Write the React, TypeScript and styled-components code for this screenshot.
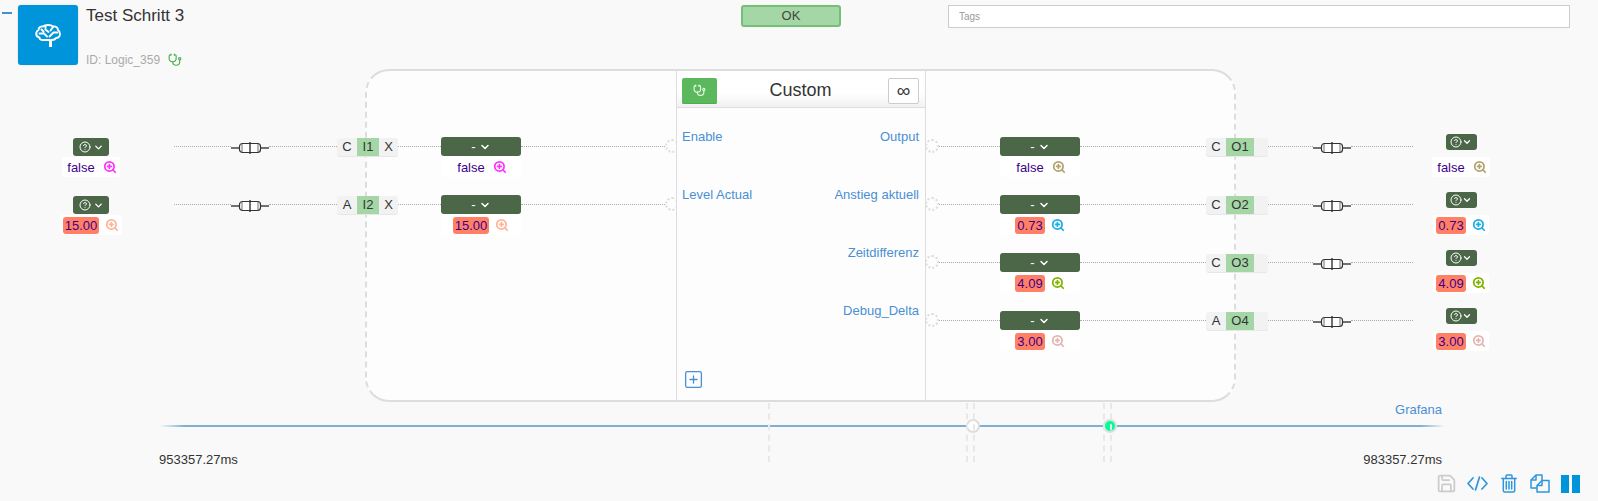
import React from 'react';
import styled, { createGlobalStyle } from 'styled-components';
import { ChevronDown, CircleHelp, Save, SquarePlus, Stethoscope, ZoomIn } from 'lucide-react';

const GlobalStyle = createGlobalStyle`
  html, body {
    margin: 0;
    padding: 0;
    background: #f9f9f9;
    font-family: "Liberation Sans", Arial, sans-serif;
    color: #333;
    overflow: hidden;
  }
`;

const Page = styled.div`
  width: 1598px;
  height: 501px;
`;

const Header = styled.header`
  display: flex;
  align-items: flex-start;
  height: 69px;
`;

const Collapse = styled.div`
  width: 10px;
  height: 2px;
  margin: 12px 6px 0 2px;
  background: #4a90c8;
`;

const Tile = styled.div`
  display: flex;
  align-items: center;
  justify-content: center;
  width: 60px;
  height: 60px;
  margin-top: 5px;
  border-radius: 3px;
  background: #0095da;
  box-shadow: 0 0 2px rgba(0, 0, 0, 0.15);
`;

const TitleBlock = styled.div`
  width: 655px;
  margin-left: 8px;
`;

const Title = styled.div`
  margin-top: 6px;
  font-size: 17px;
  line-height: 20px;
  color: #333;
`;

const IdRow = styled.div`
  display: flex;
  align-items: center;
  gap: 8px;
  margin-top: 26px;
  font-size: 12px;
  line-height: 16px;
  color: #aaa;
`;

const Status = styled.div`
  box-sizing: border-box;
  width: 100px;
  height: 22px;
  margin-top: 5px;
  border: 2px solid #72c176;
  border-radius: 3px;
  background: #a5d6a5;
  color: #444;
  font-size: 13px;
  line-height: 17px;
  text-align: center;
`;

const Tags = styled.div`
  box-sizing: border-box;
  width: 622px;
  height: 23px;
  margin: 5px 0 0 107px;
  padding-left: 10px;
  border: 1px solid #ccc;
  background: #fff;
  color: #999;
  font-size: 10px;
  line-height: 21px;
`;

const Stage = styled.section`
  position: relative;
  display: flex;
  height: 333px;

  &::before {
    content: '';
    position: absolute;
    top: 0;
    left: 365px;
    box-sizing: border-box;
    width: 871px;
    height: 333px;
    border: 2px solid #ddd;
    border-left-style: dashed;
    border-right-style: dashed;
    border-radius: 24px;
    background: #fdfdfd;
  }
`;

const Side = styled.div<{ $width: number }>`
  position: relative;
  width: ${(p) => p.$width}px;
  padding-top: 68px;
`;

const Row = styled.div`
  display: flex;
  align-items: flex-start;
  height: 58px;
`;

const Wire = styled.div<{ $width?: number }>`
  display: flex;
  align-items: center;
  flex: ${(p) => (p.$width ? `0 0 ${p.$width}px` : '1')};
  height: 19px;

  &::before {
    content: '';
    flex: 1;
    border-top: 1px dotted #aaa;
  }
`;

const FuseBox = styled.div`
  display: flex;
  align-items: center;
  height: 19px;
  margin-top: 1px;
`;

const OuterCell = styled.div<{ $width: number; $lift?: number; $gap: number; $overhang?: number }>`
  display: flex;
  flex-direction: column;
  align-items: center;
  gap: ${(p) => p.$gap}px;
  flex: 0 0 ${(p) => p.$width}px;
  margin-top: ${(p) => p.$lift ?? 0}px;
  margin-right: ${(p) => -(p.$overhang ?? 0)}px;
`;

const SignalCell = styled.div`
  display: flex;
  flex-direction: column;
  flex: 0 0 80px;
`;

const Select = styled.div<{ $width?: number; $height: number; $gap?: number }>`
  display: flex;
  align-items: center;
  justify-content: center;
  gap: ${(p) => p.$gap ?? 0}px;
  width: ${(p) => (p.$width ? `${p.$width}px` : '100%')};
  height: ${(p) => p.$height}px;
  border-radius: 3px;
  background: #4b6748;
  color: #fff;
  font-size: 13px;
  line-height: 1;
`;

const ValueBox = styled.div<{ $full?: boolean }>`
  display: flex;
  align-items: center;
  justify-content: center;
  gap: 6px;
  box-sizing: border-box;
  width: ${(p) => (p.$full ? '100%' : 'auto')};
  height: ${(p) => (p.$full ? '21px' : '20px')};
  padding: ${(p) => (p.$full ? '1px 3px 0' : '0 3px')};
  background: #fff;
  border-radius: 3px;
`;

const Value = styled.span<{ $alert: boolean }>`
  padding: 0 2px;
  border-radius: 3px;
  background: ${(p) => (p.$alert ? '#ff8064' : 'transparent')};
  color: #40008c;
  font-size: 13px;
  line-height: 17px;
`;

const Ports = styled.div<{ $width: number }>`
  display: grid;
  grid-template-columns: 20px 1fr ${(p) => (p.$width === 62 ? '14px' : '19px')};
  flex: 0 0 ${(p) => p.$width}px;
  height: 18px;
  margin-top: 1px;
  position: relative;
  border-radius: 3px;
  background: #f2f2f2;
  box-shadow: 0 1px 0 #e8e8e8;
  font-size: 13px;
  line-height: 18px;
  text-align: center;
`;

const PortName = styled.span`
  background: #a5d6a5;
`;

const Socket = styled.div<{ $side: 'left' | 'right' }>`
  flex: 0 0 14px;
  box-sizing: border-box;
  height: 14px;
  margin-top: 2px;
  margin-left: ${(p) => (p.$side === 'right' ? '-1px' : '0')};
  margin-right: ${(p) => (p.$side === 'left' ? '-3px' : '0')};
  border: 2px dotted #ddd;
  border-radius: 50%;
`;

const Panel = styled.div`
  position: relative;
  display: flex;
  flex-direction: column;
  box-sizing: border-box;
  width: 250px;
  margin: 2px 0;
  border-left: 1px solid #ddd;
  border-right: 1px solid #ddd;
  background: #fdfdfd;
`;

const PanelHeader = styled.div`
  display: flex;
  align-items: center;
  justify-content: space-between;
  box-sizing: border-box;
  height: 37px;
  padding: 3px 6px 0 5px;
  border-bottom: 1px solid #ddd;
  background: linear-gradient(to bottom, #fff 60%, #f1f1f1);
`;

const DebugButton = styled.div`
  display: flex;
  align-items: center;
  justify-content: center;
  width: 35px;
  height: 26px;
  border-radius: 2px;
  background: #5cb85c;
  box-shadow: inset 0 -1px 0 #4cae4c;
`;

const PanelTitle = styled.div`
  margin-right: 4px;
  font-size: 18px;
  color: #333;
`;

const LoopButton = styled.div`
  box-sizing: border-box;
  width: 31px;
  height: 26px;
  border: 1px solid #ccc;
  border-radius: 2px;
  background: #fff;
  color: #333;
  font-size: 19px;
  font-weight: 400;
  line-height: 24px;
  text-align: center;
`;

const PanelBody = styled.div`
  display: grid;
  grid-template-columns: 1fr 1fr;
  flex: 1;
  padding: 21px 6px 0 5px;
`;

const LabelColumn = styled.div<{ $right?: boolean }>`
  text-align: ${(p) => (p.$right ? 'right' : 'left')};
  white-space: nowrap;
`;

const PinLabel = styled.div`
  height: 58px;
  color: #4a8fd4;
  font-size: 13px;
  line-height: 16px;
`;

const AddRow = styled.div`
  display: flex;
  padding: 0 0 10px 6px;
  color: #4a8fd4;
`;

const Timeline = styled.section`
  position: relative;
  width: 1285px;
  height: 71px;
  margin-left: 160px;
`;

const Grafana = styled.div`
  padding-right: 3px;
  color: #4a8fd4;
  font-size: 13px;
  line-height: 16px;
  text-align: right;
`;

const Track = styled.div`
  height: 2px;
  margin-top: 7px;
  background: linear-gradient(to right, transparent, #7fb0d4 24px, #7fb0d4 calc(100% - 24px), transparent);
`;

const Range = styled.div`
  display: flex;
  justify-content: space-between;
  margin: 25px 3px 0 -1px;
  color: #333;
  font-size: 13px;
  line-height: 16px;
`;

const Dash = styled.div<{ $x: number }>`
  position: absolute;
  top: 1px;
  left: ${(p) => p.$x}px;
  height: 59px;
  border-left: 2px dashed #e8e8e8;
`;

const Handle = styled.div<{ $x: number; $fill: string }>`
  position: absolute;
  top: 17px;
  left: ${(p) => p.$x - 7}px;
  box-sizing: border-box;
  width: 14px;
  height: 14px;
  border: 2px solid #ddd;
  border-radius: 50%;
  background: ${(p) => p.$fill};
`;

const Toolbar = styled.div`
  display: flex;
  justify-content: flex-end;
  padding-right: 12px;
  height: 28px;
`;

const ToolButton = styled.div<{ $color: string }>`
  display: flex;
  align-items: center;
  justify-content: center;
  width: 31px;
  height: 21px;
  color: ${(p) => p.$color};
`;

const Pause = styled.div`
  display: flex;
  gap: 3px;
  height: 18px;

  &::before,
  &::after {
    content: '';
    width: 8px;
    background: #0095da;
  }
`;

const Brain = () => (
  <svg width="26" height="23" viewBox="0 0 26 23" fill="none" stroke="#fff" strokeWidth="1.9" strokeLinecap="round" strokeLinejoin="round">
    <path d="M15 16H8C5.500 16 4.300 14.800 4.500 13.500 2.300 13 1 11 1.300 9 1.500 7.500 2.500 6.500 3.500 6 3.500 3.500 6 2 8 2.500 10 .5 16 .5 18 2.500 21 2 23 4 23 6 24.500 7 25 8.500 25 10 25 12.500 23 14 21 14 20 16 18 16 16.500 16" />
    <path d="M15.500 16v7" strokeWidth="3" strokeLinecap="butt" />
    <path d="M4.500 9.500H9l3 3M10.500 2.500v3l3 2.500M14.500 12.500l4-4h4M18 3l-2.500 3.500M6.500 5.500l2 2" />
  </svg>
);

const Fuse = () => (
  <svg width="38" height="14" viewBox="0 0 38 14" fill="none" stroke="#333">
    <path d="M0 7h9M29 7h9" stroke="#444" strokeWidth="1.4" />
    <rect x="8.500" y="2.500" width="21" height="9" rx="3" strokeWidth="1.2" fill="#fff" />
    <path d="M11 3v8M27 3v8" strokeWidth=".7" />
    <path d="M19 1v12" strokeWidth="1.4" />
  </svg>
);

const CodeIcon = () => (
  <svg width="21" height="15" viewBox="0 0 21 15" fill="none" stroke="#2f95dc" strokeWidth="1.700" strokeLinecap="round" strokeLinejoin="round">
    <path d="M6 2 1 7.500 6 13M15 2l5 5.500-5 5.500M12.500 1l-4 13" />
  </svg>
);

const TrashIcon = () => (
  <svg width="16" height="19" viewBox="0 0 16 19" fill="none" stroke="#2f95dc" strokeWidth="1.500" strokeLinecap="round">
    <path d="M.800 4.500h14.400" />
    <path d="M5 4.500V2a1 1 0 0 1 1-1h4a1 1 0 0 1 1 1v2.500" />
    <path d="M2.300 4.500V16.500A1.500 1.500 0 0 0 3.800 18h8.400a1.500 1.500 0 0 0 1.500-1.500V4.500" />
    <path d="M5.300 7.500v7.500M8 7.500v7.500M10.700 7.500v7.500" />
  </svg>
);

const CopyIcon = () => (
  <svg width="20" height="19" viewBox="0 0 20 19" fill="none" stroke="#2f95dc" strokeWidth="1.500" strokeLinejoin="round">
    <path d="M7 14H1V6L6 1h6v5.500" />
    <path d="M6 1v5H1" />
    <path d="M7 11.500 12 6.500h7V18H7z" />
    <path d="M12 6.500v5H7" />
  </svg>
);

const Zoom = ({ color }: { color: string }) => <ZoomIn size={14} strokeWidth={3} color={color} />;

type Signal = { value: string; alert: boolean; color: string };

type InputRow = { type: string; name: string; signal: Signal };
type OutputRow = { type: string; name: string; signal: Signal; label: string };

const inputs: InputRow[] = [
  { type: 'C', name: 'I1', signal: { value: 'false', alert: false, color: '#ff33ff' } },
  { type: 'A', name: 'I2', signal: { value: '15.00', alert: true, color: '#ffb399' } },
];

const outputs: OutputRow[] = [
  { type: 'C', name: 'O1', label: 'Output', signal: { value: 'false', alert: false, color: '#b3a36b' } },
  { type: 'C', name: 'O2', label: 'Anstieg aktuell', signal: { value: '0.73', alert: true, color: '#1aaee5' } },
  { type: 'C', name: 'O3', label: 'Zeitdifferenz', signal: { value: '4.09', alert: true, color: '#80b300' } },
  { type: 'A', name: 'O4', label: 'Debug_Delta', signal: { value: '3.00', alert: true, color: '#e6b3b3' } },
];

const ValueLine = ({ signal, full }: { signal: Signal; full?: boolean }) => (
  <ValueBox $full={full}>
    <Value $alert={signal.alert}>{signal.value}</Value>
    <Zoom color={signal.color} />
  </ValueBox>
);

const DashSelect = () => (
  <Select $height={19} $gap={3}>
    - <ChevronDown size={12} strokeWidth={3} />
  </Select>
);

const App = () => {
  return (
    <Page>
      <GlobalStyle />
      <Header>
        <Collapse />
        <Tile>
          <Brain />
        </Tile>
        <TitleBlock>
          <Title>Test Schritt 3</Title>
          <IdRow>
            ID: Logic_359
            <Stethoscope size={14} color="#4caf50" strokeWidth={2} />
          </IdRow>
        </TitleBlock>
        <Status>OK</Status>
        <Tags>Tags</Tags>
      </Header>

      <Stage>
        <Side $width={676}>
          {inputs.map((row) => (
            <Row key={row.name}>
              <OuterCell $width={182} $gap={1} $lift={1} $overhang={8}>
                <Select $width={36} $height={18} $gap={2}>
                  <CircleHelp size={12} />
                  <ChevronDown size={11} strokeWidth={3} />
                </Select>
                <ValueLine signal={row.signal} />
              </OuterCell>
              <Wire $width={57} />
              <FuseBox>
                <Fuse />
              </FuseBox>
              <Wire />
              <Ports $width={61}>
                <span>{row.type}</span>
                <PortName>{row.name}</PortName>
                <span>X</span>
              </Ports>
              <Wire $width={43} />
              <SignalCell>
                <DashSelect />
                <ValueLine signal={row.signal} full />
              </SignalCell>
              <Wire $width={144} />
              <Socket $side="left" />
            </Row>
          ))}
        </Side>

        <Panel>
          <PanelHeader>
            <DebugButton>
              <Stethoscope size={13} color="#eafbe6" strokeWidth={2} />
            </DebugButton>
            <PanelTitle>Custom</PanelTitle>
            <LoopButton>∞</LoopButton>
          </PanelHeader>
          <PanelBody>
            <LabelColumn>
              <PinLabel>Enable</PinLabel>
              <PinLabel>Level Actual</PinLabel>
            </LabelColumn>
            <LabelColumn $right>
              {outputs.map((row) => (
                <PinLabel key={row.name}>{row.label}</PinLabel>
              ))}
            </LabelColumn>
          </PanelBody>
          <AddRow>
            <SquarePlus size={21} strokeWidth={1.5} />
          </AddRow>
        </Panel>

        <Side $width={672}>
          {outputs.map((row) => (
            <Row key={row.name}>
              <Socket $side="right" />
              <Wire $width={61} />
              <SignalCell>
                <DashSelect />
                <ValueLine signal={row.signal} full />
              </SignalCell>
              <Wire $width={126} />
              <Ports $width={62}>
                <span>{row.type}</span>
                <PortName>{row.name}</PortName>
                <span />
              </Ports>
              <Wire $width={45} />
              <FuseBox>
                <Fuse />
              </FuseBox>
              <Wire $width={62} />
              <OuterCell $width={96} $gap={7} $lift={-3}>
                <Select $width={31} $height={16}>
                  <CircleHelp size={12} />
                  <ChevronDown size={10} strokeWidth={3} />
                </Select>
                <ValueLine signal={row.signal} />
              </OuterCell>
            </Row>
          ))}
        </Side>
      </Stage>

      <Timeline>
        <Grafana>Grafana</Grafana>
        <Track />
        <Range>
          <span>953357.27ms</span>
          <span>983357.27ms</span>
        </Range>
        <Handle $x={813} $fill="#fff" />
        <Handle $x={950} $fill="#00ff99" />
        <Dash $x={608} />
        <Dash $x={806} />
        <Dash $x={813} />
        <Dash $x={943} />
        <Dash $x={950} />
      </Timeline>

      <Toolbar>
        <ToolButton $color="#ccc">
          <Save size={21} strokeWidth={2} />
        </ToolButton>
        <ToolButton $color="#2f95dc">
          <CodeIcon />
        </ToolButton>
        <ToolButton $color="#2f95dc">
          <TrashIcon />
        </ToolButton>
        <ToolButton $color="#2f95dc">
          <CopyIcon />
        </ToolButton>
        <ToolButton $color="#0095da">
          <Pause />
        </ToolButton>
      </Toolbar>
    </Page>
  );
};

export default App;
